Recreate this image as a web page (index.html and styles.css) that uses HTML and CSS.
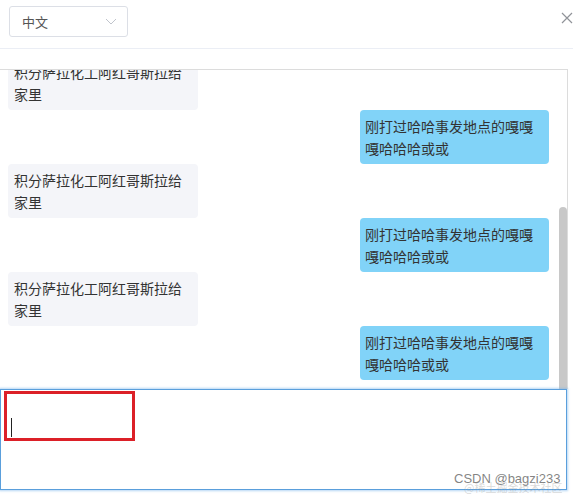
FILE: index.html
```html
<!DOCTYPE html>
<html lang="zh">
<head>
<meta charset="utf-8">
<title>Chat</title>
<link rel="stylesheet" href="styles.css">
</head>
<body>
<div class="page">
  <header class="header">
    <div class="select">
      <span class="select-text">中文</span>
      <svg class="chevron" width="12" height="7" viewBox="0 0 12 7"><path d="M1 1 L6 6 L11 1" fill="none" stroke="#c0c4cc" stroke-width="1"/></svg>
    </div>
    <svg class="close" width="12" height="12" viewBox="0 0 12 12"><path d="M1 1 L11 11 M11 1 L1 11" fill="none" stroke="#909399" stroke-width="1.2"/></svg>
  </header>
  <div class="gap"></div>
  <div class="chat">
    <div class="list">
      <div class="row left"><div class="bubble">积分萨拉化工阿红哥斯拉给家里</div></div>
      <div class="row right"><div class="bubble">刚打过哈哈事发地点的嘎嘎嘎哈哈哈或或</div></div>
      <div class="row left"><div class="bubble">积分萨拉化工阿红哥斯拉给家里</div></div>
      <div class="row right"><div class="bubble">刚打过哈哈事发地点的嘎嘎嘎哈哈哈或或</div></div>
      <div class="row left"><div class="bubble">积分萨拉化工阿红哥斯拉给家里</div></div>
      <div class="row right"><div class="bubble">刚打过哈哈事发地点的嘎嘎嘎哈哈哈或或</div></div>
    </div>
    <div class="thumb"></div>
  </div>
  <div class="input">
    <div class="mark"></div>
    <div class="caret"></div>
    <div class="wm">
      <span class="wm-main">CSDN @bagzi233</span>
      <span class="wm-sub">@稀土掘金技术社区</span>
    </div>
  </div>
</div>
</body>
</html>
```
FILE: styles.css
```css
html, body {
  margin: 0;
  padding: 0;
  background: #ffffff;
}
body {
  font-family: "Noto Sans CJK SC", "Noto Sans", sans-serif;
  font-size: 14px;
  color: #333333;
  width: 573px;
  height: 499px;
  overflow: hidden;
}
.page {
  width: 573px;
}
.header {
  height: 48px;
  border-bottom: 1px solid #ebeef5;
  display: flex;
  justify-content: space-between;
  align-items: flex-start;
  padding: 6px 0 0 9px;
  box-sizing: content-box;
  height: 42px;
}
.select {
  width: 119px;
  height: 31px;
  box-sizing: border-box;
  border: 1px solid #dcdfe6;
  border-radius: 3px;
  display: flex;
  align-items: center;
  justify-content: space-between;
  padding: 0 10px 0 12px;
}
.select-text {
  color: #555555;
  font-size: 13px;
}
.chevron {
  display: block;
}
.close {
  display: block;
  margin-top: 6px;
  margin-right: 0;
}
.gap {
  height: 20px;
}
.chat {
  position: relative;
  width: 568px;
  height: 320px;
  box-sizing: border-box;
  border-top: 1px solid #dcdcdc;
  border-right: 1px solid #dcdcdc;
  overflow: hidden;
}
.list {
  margin-top: -14px;
  padding: 0 10px 0 8px;
  width: 559px;
  box-sizing: border-box;
  display: flex;
  flex-direction: column;
}
.row {
  display: flex;
}
.row.left {
  justify-content: flex-start;
}
.row.right {
  justify-content: flex-end;
}
.bubble {
  width: 190px;
  box-sizing: border-box;
  padding: 5px 6px;
  line-height: 22px;
  border-radius: 4px;
  font-size: 14px;
  color: #333333;
}
.left .bubble {
  background: #f4f5f9;
}
.right .bubble {
  background: #81d3f8;
  width: 189px;
  padding-left: 5px;
}
.thumb {
  position: absolute;
  right: 0;
  top: 137px;
  width: 8px;
  height: 182px;
  background: #c8c8c8;
  border-radius: 4px 4px 0 0;
}
.input {
  position: relative;
  width: 567px;
  height: 101px;
  box-sizing: border-box;
  border: 1px solid #5a9fdc;
  box-shadow: 0 0 2px 1px rgba(120, 180, 235, 0.55);
}
.mark {
  position: absolute;
  left: 3px;
  top: 1px;
  width: 131px;
  height: 50px;
  box-sizing: border-box;
  border: 3px solid #dc2028;
}
.caret {
  position: absolute;
  left: 10px;
  top: 28px;
  width: 1px;
  height: 19px;
  background: #222222;
}
.wm {
  position: absolute;
  right: 2px;
  bottom: -6px;
  width: 120px;
  height: 24px;
}
.wm-main {
  position: absolute;
  left: 10px;
  top: 0;
  font-family: "Liberation Sans", Arial, sans-serif;
  font-size: 13px;
  color: rgba(110, 110, 110, 0.85);
  white-space: nowrap;
}
.wm-sub {
  position: absolute;
  left: 20px;
  top: 8px;
  font-size: 11px;
  color: rgba(150, 150, 150, 0.35);
  white-space: nowrap;
}
```
